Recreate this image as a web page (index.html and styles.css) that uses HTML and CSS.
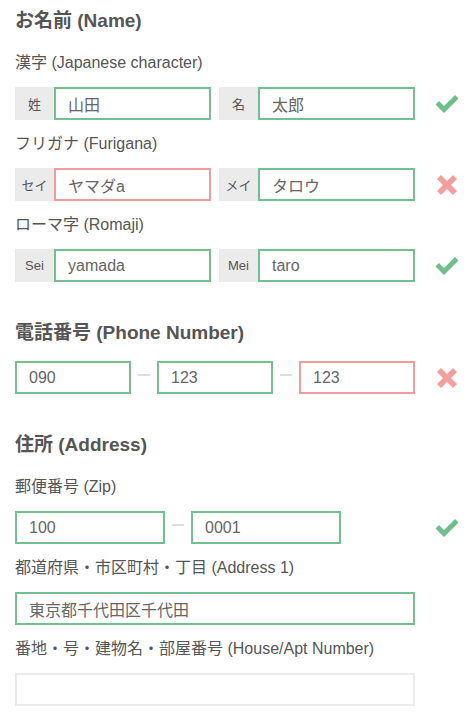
FILE: index.html
```html
<!DOCTYPE html>
<html lang="ja">
<head>
<meta charset="utf-8">
<title>Form</title>
<link rel="stylesheet" href="styles.css">
</head>
<body>
<form class="form">
  <section class="section">
    <h2 class="section-title">お名前 (Name)</h2>
    <div class="field first">
      <div class="field-label">漢字 (Japanese character)</div>
      <div class="row">
        <div class="inputs name-inputs">
          <div class="group"><span class="addon">姓</span><input class="input ok" value="山田"></div>
          <div class="group"><span class="addon">名</span><input class="input ok" value="太郎"></div>
        </div>
        <span class="status">
          <svg class="icon-check" viewBox="0 0 24 19"><path d="M0.5 10.5 L4 7 L9 12 L20 1 L23.5 4.5 L9 19 Z" /></svg>
        </span>
      </div>
    </div>
    <div class="field">
      <div class="field-label">フリガナ (Furigana)</div>
      <div class="row">
        <div class="inputs name-inputs">
          <div class="group"><span class="addon">セイ</span><input class="input ng" value="ヤマダa"></div>
          <div class="group"><span class="addon">メイ</span><input class="input ok" value="タロウ"></div>
        </div>
        <span class="status">
          <svg class="icon-x" viewBox="0 0 22 22"><path d="M1 5 L5 1 L11 7 L17 1 L21 5 L15 11 L21 17 L17 21 L11 15 L5 21 L1 17 L7 11 Z" /></svg>
        </span>
      </div>
    </div>
    <div class="field">
      <div class="field-label">ローマ字 (Romaji)</div>
      <div class="row">
        <div class="inputs name-inputs">
          <div class="group"><span class="addon">Sei</span><input class="input ok" value="yamada"></div>
          <div class="group"><span class="addon">Mei</span><input class="input ok" value="taro"></div>
        </div>
        <span class="status">
          <svg class="icon-check" viewBox="0 0 24 19"><path d="M0.5 10.5 L4 7 L9 12 L20 1 L23.5 4.5 L9 19 Z" /></svg>
        </span>
      </div>
    </div>
  </section>

  <section class="section">
    <h2 class="section-title">電話番号 (Phone Number)</h2>
    <div class="row">
      <div class="inputs split-inputs">
        <input class="input ok" value="090">
        <span class="dash"></span>
        <input class="input ok" value="123">
        <span class="dash"></span>
        <input class="input ng" value="123">
      </div>
      <span class="status">
        <svg class="icon-x" viewBox="0 0 22 22"><path d="M1 5 L5 1 L11 7 L17 1 L21 5 L15 11 L21 17 L17 21 L11 15 L5 21 L1 17 L7 11 Z" /></svg>
      </span>
    </div>
  </section>

  <section class="section">
    <h2 class="section-title">住所 (Address)</h2>
    <div class="field first">
      <div class="field-label">郵便番号 (Zip)</div>
      <div class="row">
        <div class="inputs split-inputs">
          <input class="input ok zip" value="100">
          <span class="dash"></span>
          <input class="input ok zip" value="0001">
          <span class="spacer"></span>
        </div>
        <span class="status">
          <svg class="icon-check" viewBox="0 0 24 19"><path d="M0.5 10.5 L4 7 L9 12 L20 1 L23.5 4.5 L9 19 Z" /></svg>
        </span>
      </div>
    </div>
    <div class="field">
      <div class="field-label">都道府県・市区町村・丁目 (Address 1)</div>
      <div class="row">
        <div class="inputs">
          <input class="input ok full" value="東京都千代田区千代田">
        </div>
      </div>
    </div>
    <div class="field">
      <div class="field-label">番地・号・建物名・部屋番号 (House/Apt Number)</div>
      <div class="row">
        <div class="inputs">
          <input class="input empty full" value="">
        </div>
      </div>
    </div>
  </section>
</form>
</body>
</html>
```

FILE: styles.css
```css
* { box-sizing: border-box; }

html, body {
  margin: 0;
  padding: 0;
  background: #ffffff;
}

body {
  font-family: "Liberation Sans", "Noto Sans CJK JP", sans-serif;
  color: #555555;
}

.form {
  padding: 9px 0 0 15px;
  width: 472px;
}

.section + .section {
  margin-top: 39px;
}

.section-title {
  margin: 0 0 16px;
  font-size: 19px;
  line-height: 24px;
  font-weight: bold;
  color: #555555;
}

.field.first {
  padding-top: 4px;
}

.field + .field {
  margin-top: 14px;
}

.field-label {
  font-size: 16px;
  line-height: 20px;
  height: 20px;
  margin-bottom: 14px;
  color: #555555;
  white-space: nowrap;
}

.row {
  display: flex;
  align-items: center;
}

.inputs {
  width: 400px;
  flex: none;
  display: flex;
  align-items: center;
}

.name-inputs {
  gap: 8px;
}

.group {
  display: flex;
  flex: 1 1 0;
  min-width: 0;
  height: 33px;
}

.addon {
  width: 39px;
  flex: none;
  background: #ebebeb;
  display: flex;
  align-items: center;
  justify-content: center;
  font-size: 13px;
  color: #555555;
}

.input {
  height: 33px;
  width: 0;
  min-width: 0;
  flex: 1 1 0;
  border: 2px solid #ebebeb;
  border-radius: 0;
  padding: 0 12px;
  margin: 0;
  font-family: "Liberation Sans", "Noto Sans CJK JP", sans-serif;
  font-size: 16px;
  color: #666666;
  background: #ffffff;
  outline: none;
}

.input.ok { border-color: #74bf8f; }
.input.ng { border-color: #f09c9b; }
.input.empty { border-color: #ebebeb; }

.split-inputs .input {
  width: 116px;
  flex: none;
}

.split-inputs .input.zip {
  width: 150px;
}

.input.full {
  width: 400px;
  flex: none;
}

.spacer { flex: 1; }

.dash {
  width: 26px;
  flex: none;
  display: flex;
  justify-content: center;
  height: 33px;
  align-items: center;
}

.dash::before {
  content: "";
  display: block;
  width: 12px;
  height: 2px;
  background: #dddddd;
  margin-top: -6px;
}

.status {
  margin-left: 20px;
  width: 24px;
  height: 22px;
  flex: none;
  display: flex;
  align-items: center;
  justify-content: center;
}

.icon-check {
  width: 24px;
  height: 19px;
  fill: #6fbf8b;
}

.icon-x {
  width: 22px;
  height: 22px;
  fill: #f39f9e;
}
```
